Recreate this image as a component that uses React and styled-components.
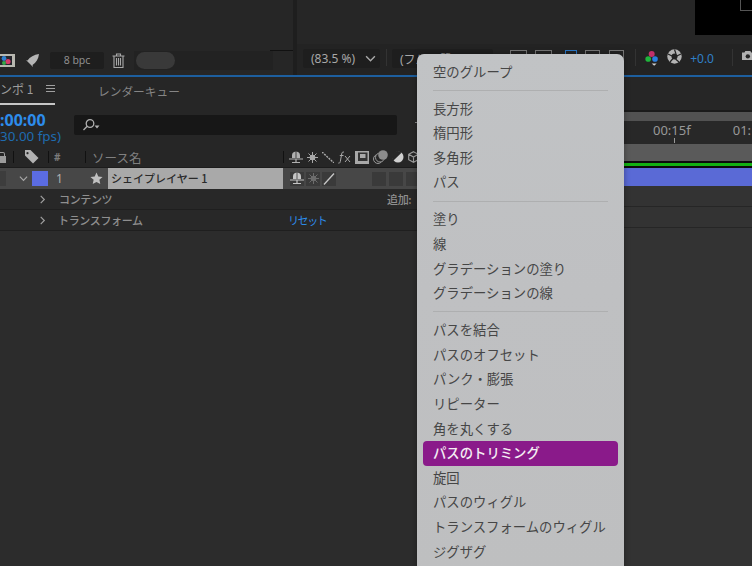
import React from "react";
import styled, { createGlobalStyle } from "styled-components";

const Global = createGlobalStyle`
  html, body { margin: 0; padding: 0; background: #2c2c2c; }
  * { box-sizing: border-box; }
`;

const FONT = `"Noto Sans CJK JP", "Noto Sans", sans-serif`;

const Page = styled.div`
  position: relative;
  width: 752px;
  height: 566px;
  overflow: hidden;
  background: #2c2c2c;
  font-family: ${FONT};
  color: #a0a0a0;
`;

/* ---------- top panels ---------- */
const TopPanels = styled.div`
  display: flex;
  height: 75px;
  background: #1e1e1e;
  gap: 4px;
`;
const LeftPanel = styled.div`
  width: 293px;
  display: flex;
  flex-direction: column;
  background: #262626;
`;
const LeftCanvas = styled.div`
  height: 51px;
  flex: none;
  display: flex;
  justify-content: flex-end;
  align-items: flex-end;
`;
const CanvasEdge = styled.div`
  width: 23px;
  height: 1px;
  background: #111;
`;
const LeftToolbar = styled.div`
  width: 273px;
  height: 19px;
  display: flex;
  align-items: center;
`;
const PaddedIcon = styled.span`
  display: inline-flex;
  flex: none;
  margin-left: ${(p) => p.$ml || 0}px;
`;
const BpcBox = styled.div`
  width: 54px;
  height: 17px;
  margin-left: 10px;
  border-radius: 2px;
  background: #1e1e1e;
  font-family: "Noto Sans", sans-serif;
  font-size: 10.5px;
  line-height: 17px;
  text-align: center;
  color: #8f8f8f;
`;
const PillStrip = styled.div`
  flex: 1;
  height: 19px;
  margin-left: 9px;
  padding: 1px 0 1px 2px;
  background: #222;
`;
const Pill = styled.div`
  width: 39px;
  height: 17px;
  border-radius: 9px;
  background: #393939;
`;
const RightPanel = styled.div`
  flex: 1;
  display: flex;
  flex-direction: column;
  background: #262626;
  min-width: 0;
`;
const Viewer = styled.div`
  height: 44px;
  display: flex;
  justify-content: flex-end;
  align-items: flex-start;
  flex: none;
`;
const BlackView = styled.div`
  width: 57px;
  height: 35px;
  background: #000;
  padding-left: 45px;
`;
const BlackMark = styled.div`
  height: 11px;
  border: 1px solid #555;
  border-top: 0;
  border-right: 0;
`;
const ViewToolbar = styled.div`
  flex: 1;
  display: flex;
  align-items: flex-start;
  background: #232323;
  padding: 5px 0 0 6px;
`;
const Dropdown = styled.div`
  width: ${(p) => p.$w}px;
  height: 19px;
  flex: none;
  display: flex;
  align-items: center;
  justify-content: space-between;
  padding: 0 4px 0 8px;
  background: #1e1e1e;
  border-radius: 2px;
  font-family: "Noto Sans", "Noto Sans CJK JP", sans-serif;
  font-size: 12px;
  color: #a8a8a8;
  white-space: nowrap;
  overflow: hidden;
`;
const ToolSep = styled.div`
  width: 1px;
  height: 17px;
  flex: none;
  margin: 0 ${(p) => p.$right ?? 5}px 0 ${(p) => p.$left ?? 6}px;
  background: #333;
`;
const ViewBox = styled.div`
  width: ${(p) => p.$w}px;
  height: 14px;
  flex: none;
  margin: 1px 0 0 ${(p) => p.$ml}px;
  border: 1px solid ${(p) => p.$color || "#777"};
`;
const PlusValue = styled.span`
  margin-left: 8px;
  font-family: "Noto Sans", sans-serif;
  font-size: 12px;
  line-height: 19px;
  color: #2f80c8;
  flex: none;
`;
const BlueLine = styled.div`
  height: 2px;
  background: #1d5f9f;
`;

/* ---------- timeline ---------- */
const Timeline = styled.div`
  display: flex;
  height: 489px;
`;
const LeftColumn = styled.div`
  width: 620px;
  flex: none;
  background: #2c2c2c;
`;
const Tabs = styled.div`
  height: 28px;
  display: flex;
  background: #262626;
`;
const ActiveTab = styled.div`
  width: 55px;
  display: flex;
  align-items: center;
  justify-content: space-between;
  padding-bottom: 3px;
  border-bottom: 2px solid #c6c6c6;
  font-size: 12px;
  color: #9c9c9c;
  overflow: hidden;
  white-space: nowrap;
`;
const ClippedTitle = styled.span`
  margin-left: -12px;
`;
const Burger = styled.span`
  width: 9px;
  height: 7px;
  flex: none;
  border-top: 1px solid #a0a0a0;
  border-bottom: 1px solid #a0a0a0;
  position: relative;
  &::after {
    content: "";
    position: absolute;
    left: 0;
    right: 0;
    top: 2px;
    height: 1px;
    background: #a0a0a0;
  }
`;
const Tab = styled.div`
  margin-left: 43px;
  line-height: 27px;
  font-size: 11.7px;
  color: #858585;
`;
const ControlRow = styled.div`
  height: 42px;
  display: flex;
  background: #262626;
`;
const TimeBlock = styled.div`
  width: 74px;
  flex: none;
  padding-top: 6px;
  white-space: nowrap;
  overflow: hidden;
`;
const TimeCode = styled.div`
  font-family: "Noto Sans", sans-serif;
  font-weight: 700;
  font-size: 16px;
  line-height: 18px;
  color: #2d8ceb;
`;
const Fps = styled.div`
  font-family: "Noto Sans", sans-serif;
  font-size: 13.4px;
  line-height: 15px;
  color: #1f6cb0;
`;
const SearchBox = styled.div`
  width: 323px;
  height: 20px;
  margin-top: 10px;
  padding-left: 8px;
  display: flex;
  align-items: center;
  background: #171717;
  border-radius: 2px;
`;
const SearchMark = styled.div`
  width: 3px;
  height: 1px;
  margin: 17px 0 0 18px;
  background: #8a8a8a;
`;
const RowBase = styled.div`
  display: flex;
  align-items: center;
  flex: none;
`;
const HeaderRow = styled(RowBase)`
  height: 21px;
  background: #262626;
  border-bottom: 1px solid #1c1c1c;
`;
const Slot = styled.div`
  width: ${(p) => p.$w}px;
  flex: none;
  display: flex;
  align-items: center;
  justify-content: ${(p) => (p.$center ? "center" : "flex-start")};
  padding-left: ${(p) => p.$pl || 0}px;
  height: 100%;
  white-space: nowrap;
  overflow: hidden;
`;
const HeadSep = styled.div`
  width: 1px;
  height: 12px;
  flex: none;
  background: #111;
`;
const HeadHash = styled.span`
  font-family: "Noto Sans", sans-serif;
  font-size: 10px;
  font-weight: 700;
  color: #7a7a7a;
`;
const HeadName = styled.span`
  font-size: 12.5px;
  color: #808080;
`;
const IconRow = styled.div`
  display: flex;
  align-items: center;
  gap: 4px;
  padding-left: 5px;
`;
const LayerRow = styled(RowBase)`
  height: 21px;
  background: #474747;
`;
const EdgeBox = styled.div`
  width: 6px;
  height: 15px;
  background: #3d3d3d;
  flex: none;
`;
const Swatch = styled.div`
  width: 16px;
  height: 15px;
  background: #5b6ce2;
`;
const LayerIndex = styled.span`
  font-family: "Noto Sans", sans-serif;
  font-size: 12px;
  color: #b0b0b0;
`;
const NameField = styled.div`
  width: 175px;
  height: 21px;
  flex: none;
  padding-left: 3px;
  background: #a9a9a9;
  font-size: 11px;
  font-weight: 500;
  line-height: 21px;
  color: #2a2a2a;
  white-space: nowrap;
`;
const SwitchBox = styled.div`
  width: 14px;
  height: 14px;
  flex: none;
  display: flex;
  align-items: center;
  justify-content: center;
  margin-left: ${(p) => p.$ml ?? 2}px;
  background: #3a3a3a;
`;
const SubRow = styled(RowBase)`
  height: 21px;
  background: #282828;
  border-bottom: 1px solid #1f1f1f;
  font-size: 11px;
  color: #8f8f8f;
`;
const SubLabel = styled.span`
  font-weight: 500;
  letter-spacing: -0.35px;
`;
const ResetLink = styled.span`
  color: #2d8ceb;
  font-size: 11px;
  letter-spacing: -1.4px;
`;
const RightColumn = styled.div`
  flex: 1;
  display: flex;
  flex-direction: column;
  background: #333;
`;
const RightHead = styled.div`
  height: 35px;
  flex: none;
  background: #262626;
  border-bottom: 2px solid #1b1b1b;
`;
const WorkBar = styled.div`
  height: 9px;
  flex: none;
  background: #525252;
`;
const Ruler = styled.div`
  height: 23px;
  flex: none;
  display: flex;
  position: relative;
  padding: 0 0 0 33px;
  gap: 42px;
  background: #282828;
  font-family: "Noto Sans", sans-serif;
  font-size: 13px;
  line-height: 19px;
  color: #989898;
  white-space: nowrap;
  overflow: hidden;
`;
const Tick = styled.div`
  position: absolute;
  left: 54px;
  bottom: 1px;
  width: 1px;
  height: 5px;
  background: #9a9a9a;
`;
const GreyBand = styled.div`
  height: 17px;
  flex: none;
  background: #5a5a5a;
`;
const GreenBand = styled.div`
  height: 7px;
  flex: none;
  padding: 2px 0;
  background: #0c0c0c;
  &::before {
    content: "";
    display: block;
    height: 3px;
    background: #12b012;
  }
`;
const LayerBar = styled.div`
  height: 18px;
  flex: none;
  background: #5a6ad6;
`;
const TrackRow = styled.div`
  height: 21px;
  flex: none;
  background: #333;
  border-bottom: 1px solid #262626;
`;

/* ---------- popup menu ---------- */
const Menu = styled.div`
  position: absolute;
  left: 417px;
  top: 54px;
  width: 207px;
  height: 520px;
  padding-top: 5.7px;
  border-radius: 7px;
  background: linear-gradient(180deg, #c1c3c5 0%, #bfc0c2 45%, #bebfc0 100%);
  box-shadow: 0 0 6px rgba(0, 0, 0, 0.35);
`;
const MenuItem = styled.div`
  height: 24.6px;
  margin: 0 6px;
  padding-left: 10px;
  border-radius: 4px;
  font-size: 13.35px;
  line-height: 24.6px;
  white-space: nowrap;
  color: ${(p) => (p.$active ? "#f4eef4" : "#464646")};
  background: ${(p) => (p.$active ? "#8a1a8a" : "transparent")};
  font-weight: ${(p) => (p.$active ? 500 : 400)};
`;
const MenuSep = styled.div`
  height: 1px;
  margin: 5.7px 16px;
  background: #aeafb0;
`;

/* ---------- drawings ---------- */
const Chevron = ({ down, color = "#a0a0a0", size = 9 }) => (
  <svg width={size} height={size} viewBox="0 0 10 10" fill="none" stroke={color} strokeWidth="1.3">
    {down ? <path d="M1 3l4 4 4-4" /> : <path d="M3 1l4 4-4 4" />}
  </svg>
);
const FilmIcon = () => (
  <svg width="15" height="15" viewBox="0 0 15 15" style={{ display: "block" }}>
    <rect x="0" y="1" width="15" height="13" fill="#b8b8b0" />
    <rect x="0" y="3" width="12" height="9" fill="#26262c" />
    <circle cx="4" cy="5.5" r="2.4" fill="#2f7fd0" />
    <circle cx="8" cy="8.5" r="2.6" fill="#d83a6a" />
    <circle cx="4" cy="10" r="2" fill="#35a84a" />
  </svg>
);
const Rocket = () => (
  <svg width="15" height="15" viewBox="0 0 15 15" fill="#b5b5b5">
    <path d="M14 1C9 1.5 5 4 2.5 7.5L1 7l2.5 2.5 2 2L8 14l-.5-2C11 9.500 13.500 6 14 1z" />
  </svg>
);
const Trash = () => (
  <svg width="13" height="15" viewBox="0 0 13 15" fill="none" stroke="#a8a8a8" strokeWidth="1.1">
    <path d="M.5 3h12M4.500 3V1h4v2M2 3v11.500h9V3M4.500 5v7.500M6.500 5v7.500M8.500 5v7.500" />
  </svg>
);
const Magnifier = () => (
  <svg width="18" height="14" viewBox="0 0 18 14" fill="none" stroke="#b0b0b0" strokeWidth="1.3">
    <circle cx="8" cy="5.500" r="3.800" />
    <path d="M5.200 8.200L1.500 12" />
    <path d="M12.500 7.500h5l-2.500 3z" fill="#b0b0b0" stroke="none" />
  </svg>
);
const ColorBalls = () => (
  <svg width="17" height="20" viewBox="0 0 17 20">
    <circle cx="8" cy="4" r="3.600" fill="#c0306a" />
    <circle cx="3.800" cy="10" r="3.400" fill="#1fb53c" />
    <circle cx="12" cy="10" r="3.400" fill="#2a7fe0" />
    <path d="M8 15.500h6l-3 2.500z" fill="#cfcfcf" />
  </svg>
);
const Shutter = () => (
  <svg width="15" height="15" viewBox="0 0 15 15">
    <circle cx="7.500" cy="7.500" r="7.200" fill="#b4b4b4" />
    <circle cx="7.500" cy="7.500" r="3" fill="#232323" />
    <path d="M7.500 .5L9 5M14 5L9.800 7M12 13L8.500 10M3 13l3-3.500M1 5l4 2" stroke="#232323" strokeWidth="1.200" />
  </svg>
);
const Camera = () => (
  <svg width="12" height="13" viewBox="0 0 12 13" fill="#b0b0b0">
    <path d="M0 3h3l1-2h6l1 2h3v9H0z" />
    <circle cx="7" cy="7.500" r="2.600" fill="#232323" />
  </svg>
);
const Lock = () => (
  <svg width="6" height="12" viewBox="0 0 6 12" fill="#9c9c9c">
    <path d="M0 5h6v7H0zM0 1h3a2 2 0 0 1 2 2v2H4V3a1 1 0 0 0-1-1H0z" />
  </svg>
);
const TagIcon = () => (
  <svg width="15" height="14" viewBox="0 0 15 14" fill="#b2b2b2">
    <path d="M1 0h5.500L14.500 8 9 13.500 1 5.500zM3.500 2a1.100 1.100 0 1 0 .01 0z" fillRule="evenodd" />
  </svg>
);
const Star = () => (
  <svg width="13" height="13" viewBox="0 0 24 24" fill="#c0c0c0">
    <path d="M12 1l3.300 7.300 7.900.9-5.900 5.300 1.700 7.800L12 18.300l-7 4 1.700-7.800L.8 9.200l7.900-.9z" />
  </svg>
);
const Shy = ({ color = "#b0b0b0" }) => (
  <svg width="14" height="13" viewBox="0 0 14 13" fill={color}>
    <path d="M3 7V4.500a4 4 0 0 1 3.600-3.900V7zM7.400 7V.6A4 4 0 0 1 11 4.500V7zM0 7.500h14v1H0zM6.400 8.500h1.200V11H6.400zM3 11h8v1H3z" />
  </svg>
);
const Sun = ({ color = "#a8a8a8" }) => (
  <svg width="11" height="11" viewBox="0 0 11 11" fill={color} stroke={color}>
    <circle cx="5.500" cy="5.500" r="2.800" strokeWidth="0" />
    <path d="M5.500 0v11M0 5.500h11M1.500 1.500l8 8M9.500 1.500l-8 8" strokeWidth="1" />
  </svg>
);
const DottedLine = () => (
  <svg width="12" height="11" viewBox="0 0 12 11" stroke="#a8a8a8" strokeWidth="1.400" strokeDasharray="2 1">
    <path d="M0 0l12 11" />
  </svg>
);
const Fx = () => (
  <svg width="13" height="13" viewBox="0 0 13 13" fill="none" stroke="#a8a8a8" strokeWidth="1">
    <path d="M6 1.200C4.500.5 4 1.500 3.700 3L2.300 10.500C2 12 1.200 12.500.3 12M1.800 4.500h3.700M7 5l5 6M12 5l-5 6" />
  </svg>
);
const MotionFilm = () => (
  <svg width="14" height="13" viewBox="0 0 14 13">
    <rect x="0" y="0" width="14" height="13" fill="#a8a8a8" />
    <rect x="3" y="1.500" width="9.500" height="8.500" fill="#333" />
    <rect x="5" y="3" width="5.500" height="4" fill="#a8a8a8" />
  </svg>
);
const Stacked = () => (
  <svg width="15" height="14" viewBox="0 0 15 14">
    <circle cx="5" cy="9" r="4.500" fill="none" stroke="#999" />
    <circle cx="7" cy="7.500" r="4.500" fill="#262626" stroke="#999" />
    <circle cx="10" cy="5" r="4.800" fill="#8c8c8c" />
  </svg>
);
const HalfCircle = () => (
  <svg width="12" height="12" viewBox="0 0 12 12">
    <circle cx="6" cy="6" r="5.500" fill="#cfcfcf" />
    <path d="M1.500 9.500A5.500 5.500 0 0 1 9.500 1.700z" fill="#262626" />
  </svg>
);
const Cube = () => (
  <svg width="11" height="12" viewBox="0 0 11 12" fill="none" stroke="#a0a0a0" strokeWidth="1.100">
    <path d="M5.500.7l4.800 2.600v5.400l-4.800 2.600L.7 8.700V3.300zM.7 3.300l4.800 2.700 4.800-2.700M5.500 6v5.300" />
  </svg>
);
const Slash = () => (
  <svg width="12" height="12" viewBox="0 0 12 12" stroke="#c8c8c8" strokeWidth="1.300">
    <path d="M1 11.500L11 .5" />
  </svg>
);

const menuEntries = [
  "空のグループ", null,
  "長方形", "楕円形", "多角形", "パス", null,
  "塗り", "線", "グラデーションの塗り", "グラデーションの線", null,
  "パスを結合", "パスのオフセット", "パンク・膨張", "リピーター", "角を丸くする",
  "*パスのトリミング", "旋回", "パスのウィグル", "トランスフォームのウィグル", "ジグザグ",
];

export default function App() {
  return (
    <Page>
      <Global />
      <TopPanels>
        <LeftPanel>
          <LeftCanvas><CanvasEdge /></LeftCanvas>
          <LeftToolbar>
            <PaddedIcon><FilmIcon /></PaddedIcon>
            <PaddedIcon $ml={10}><Rocket /></PaddedIcon>
            <BpcBox>8 bpc</BpcBox>
            <PaddedIcon $ml={8}><Trash /></PaddedIcon>
            <PillStrip><Pill /></PillStrip>
          </LeftToolbar>
        </LeftPanel>
        <RightPanel>
          <Viewer>
            <BlackView><BlackMark /></BlackView>
          </Viewer>
          <ViewToolbar>
            <Dropdown $w={77}>
              (83.5 %)
              <Chevron down color="#a8a8a8" size={11} />
            </Dropdown>
            <ToolSep />
            <Dropdown $w={101}>(フル画質)</Dropdown>
            <ViewBox $w={17} $ml={17} />
            <ViewBox $w={17} $ml={8} />
            <ViewBox $w={12} $ml={13} $color="#2a78c8" />
            <ViewBox $w={15} $ml={8} />
            <ViewBox $w={15} $ml={9} />
            <ToolSep $left={11} $right={9} />
            <ColorBalls />
            <PaddedIcon $ml={8}><Shutter /></PaddedIcon>
            <PlusValue>+0.0</PlusValue>
            <ToolSep $left={18} $right={9} />
            <Camera />
          </ViewToolbar>
        </RightPanel>
      </TopPanels>
      <BlueLine />
      <Timeline>
        <LeftColumn>
          <Tabs>
            <ActiveTab>
              <ClippedTitle>コンポ 1</ClippedTitle>
              <Burger />
            </ActiveTab>
            <Tab>レンダーキュー</Tab>
          </Tabs>
          <ControlRow>
            <TimeBlock>
              <TimeCode>:00:00</TimeCode>
              <Fps>30.00 fps)</Fps>
            </TimeBlock>
            <SearchBox><Magnifier /></SearchBox>
            <SearchMark />
          </ControlRow>
          <HeaderRow>
            <Slot $w={13}><Lock /></Slot>
            <HeadSep />
            <Slot $w={34} $center><TagIcon /></Slot>
            <HeadSep />
            <Slot $w={36} $pl={5}><HeadHash>#</HeadHash></Slot>
            <HeadSep />
            <Slot $w={197} $pl={6}><HeadName>ソース名</HeadName></Slot>
            <HeadSep />
            <IconRow>
              <Shy />
              <Sun />
              <DottedLine />
              <Fx />
              <MotionFilm />
              <Stacked />
              <HalfCircle />
              <Cube />
            </IconRow>
          </HeaderRow>
          <LayerRow>
            <Slot $w={19}><EdgeBox /></Slot>
            <Slot $w={13}><Chevron down color="#a8a8a8" /></Slot>
            <Slot $w={16}><Swatch /></Slot>
            <Slot $w={42} $pl={8}><LayerIndex>1</LayerIndex></Slot>
            <Slot $w={18}><Star /></Slot>
            <NameField>シェイプレイヤー 1</NameField>
            <SwitchBox $ml={7}><Shy color="#c4c4c4" /></SwitchBox>
            <SwitchBox><Sun color="#6c6c6c" /></SwitchBox>
            <SwitchBox><Slash /></SwitchBox>
            <SwitchBox $ml={36} />
            <SwitchBox $ml={3} />
            <SwitchBox $ml={3} />
          </LayerRow>
          <SubRow>
            <Slot $w={38} />
            <Slot $w={21}><Chevron /></Slot>
            <Slot $w={328}><SubLabel>コンテンツ</SubLabel></Slot>
            <Slot $w={40}><SubLabel>追加:</SubLabel></Slot>
          </SubRow>
          <SubRow>
            <Slot $w={38} />
            <Slot $w={20}><Chevron /></Slot>
            <Slot $w={230}><SubLabel>トランスフォーム</SubLabel></Slot>
            <ResetLink>リセット</ResetLink>
          </SubRow>
        </LeftColumn>
        <RightColumn>
          <RightHead />
          <WorkBar />
          <Ruler>
            <span>00:15f</span>
            <span>01:</span>
            <Tick />
          </Ruler>
          <GreyBand />
          <GreenBand />
          <LayerBar />
          <TrackRow />
          <TrackRow />
        </RightColumn>
      </Timeline>
      <Menu>
        {menuEntries.map((entry, i) =>
          entry === null ? (
            <MenuSep key={i} />
          ) : entry.startsWith("*") ? (
            <MenuItem key={i} $active>{entry.slice(1)}</MenuItem>
          ) : (
            <MenuItem key={i}>{entry}</MenuItem>
          )
        )}
      </Menu>
    </Page>
  );
}
